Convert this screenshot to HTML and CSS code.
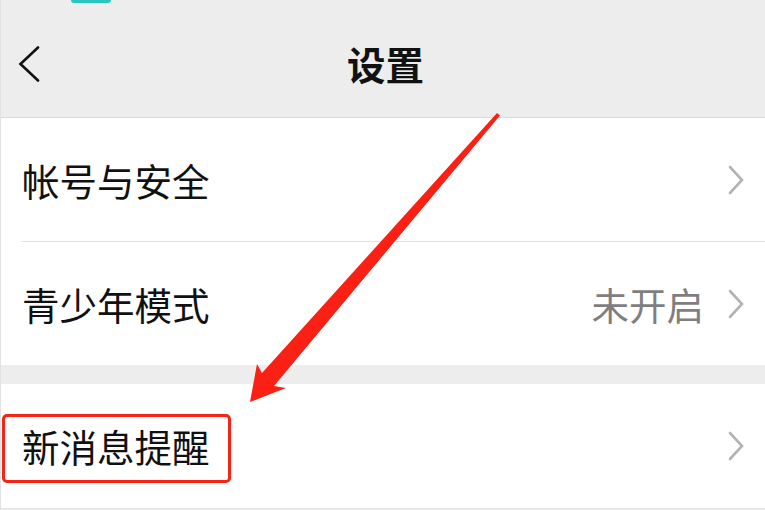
FILE: index.html
```html
<!DOCTYPE html>
<html lang="zh-CN">
<head>
    <meta charset="UTF-8">
    <title>设置</title>
    <link rel="stylesheet" href="styles.css">
</head>
<body>
    <div class="page">
        <div class="status-tab"></div>
        <div class="header">
            <svg class="back" width="22" height="36" viewBox="0 0 22 36">
                <polyline points="20,1.5 2.5,18 20,34.5" fill="none" stroke="#111" stroke-width="2.6" stroke-linecap="round" stroke-linejoin="miter"/>
            </svg>
            <h1 class="title">设置</h1>
        </div>

        <div class="group">
            <div class="row">
                <span class="label">帐号与安全</span>
                <svg class="arrow" width="16" height="30" viewBox="0 0 16 30">
                    <polyline points="2,2 14,15 2,28" fill="none" stroke="#b3b3b3" stroke-width="2.6" stroke-linecap="round"/>
                </svg>
            </div>
            <div class="row">
                <span class="label">青少年模式</span>
                <span class="value">未开启</span>
                <svg class="arrow" width="16" height="30" viewBox="0 0 16 30">
                    <polyline points="2,2 14,15 2,28" fill="none" stroke="#b3b3b3" stroke-width="2.6" stroke-linecap="round"/>
                </svg>
            </div>
        </div>

        <div class="group last">
            <div class="row">
                <span class="label highlight">新消息提醒</span>
                <svg class="arrow" width="16" height="30" viewBox="0 0 16 30">
                    <polyline points="2,2 14,15 2,28" fill="none" stroke="#b3b3b3" stroke-width="2.6" stroke-linecap="round"/>
                </svg>
            </div>
        </div>

        <svg class="pointer" width="765" height="510" viewBox="0 0 765 510">
            <polygon points="497,113 500,115.5 274,386 286,388 250,402 257,364 262,373" fill="#fa2014"/>
        </svg>
    </div>
</body>
</html>
```

FILE: styles.css
```css
* {
    box-sizing: border-box;
    margin: 0;
    padding: 0;
}

body {
    font-family: "Noto Sans CJK SC", "Noto Sans", sans-serif;
    background: #ededed;
    width: 765px;
    height: 510px;
    overflow: hidden;
}

.page {
    position: relative;
    width: 765px;
    height: 510px;
    border-left: 1px solid #e2e2e2;
}

.status-tab {
    position: absolute;
    left: 70px;
    top: 0;
    width: 40px;
    height: 3px;
    background: #2bc6bf;
    border-radius: 0 0 3px 3px;
}

.header {
    height: 118px;
    padding-top: 9px;
    display: flex;
    align-items: center;
    justify-content: center;
    position: relative;
    border-bottom: 1px solid #dadada;
}

.back {
    position: absolute;
    left: 17px;
    top: 46px;
}

.title {
    font-size: 38.5px;
    font-weight: bold;
    color: #111;
    line-height: 1;
    margin-left: 5px;
}

.group {
    background: #fff;
    margin-bottom: 19px;
}

.row {
    box-sizing: content-box;
    height: 123px;
    display: flex;
    align-items: center;
    padding: 0 21px;
    position: relative;
}

.row + .row {
    border-top: 1px solid #e3e3e3;
    margin-left: 20px;
    padding-left: 1px;
}

.last {
    margin-bottom: 0;
}

.last .row {
    height: 124px;
    border-bottom: 1px solid #e3e3e3;
}

.label {
    flex: 1;
    font-size: 37.5px;
    color: #111;
    line-height: 1;
    position: relative;
}

.value {
    font-size: 37.5px;
    color: #7f7f7f;
    line-height: 1;
    margin-right: 24px;
}

.arrow {
    display: block;
}

.highlight {
    flex: 0 0 auto;
    margin-right: auto;
}

.highlight::after {
    content: "";
    box-sizing: border-box;
    position: absolute;
    left: -20px;
    top: -13px;
    width: 229px;
    height: 69px;
    border: 3px solid #f52416;
    border-radius: 5px;
}

.pointer {
    position: absolute;
    left: -1px;
    top: 0;
    pointer-events: none;
}
```
